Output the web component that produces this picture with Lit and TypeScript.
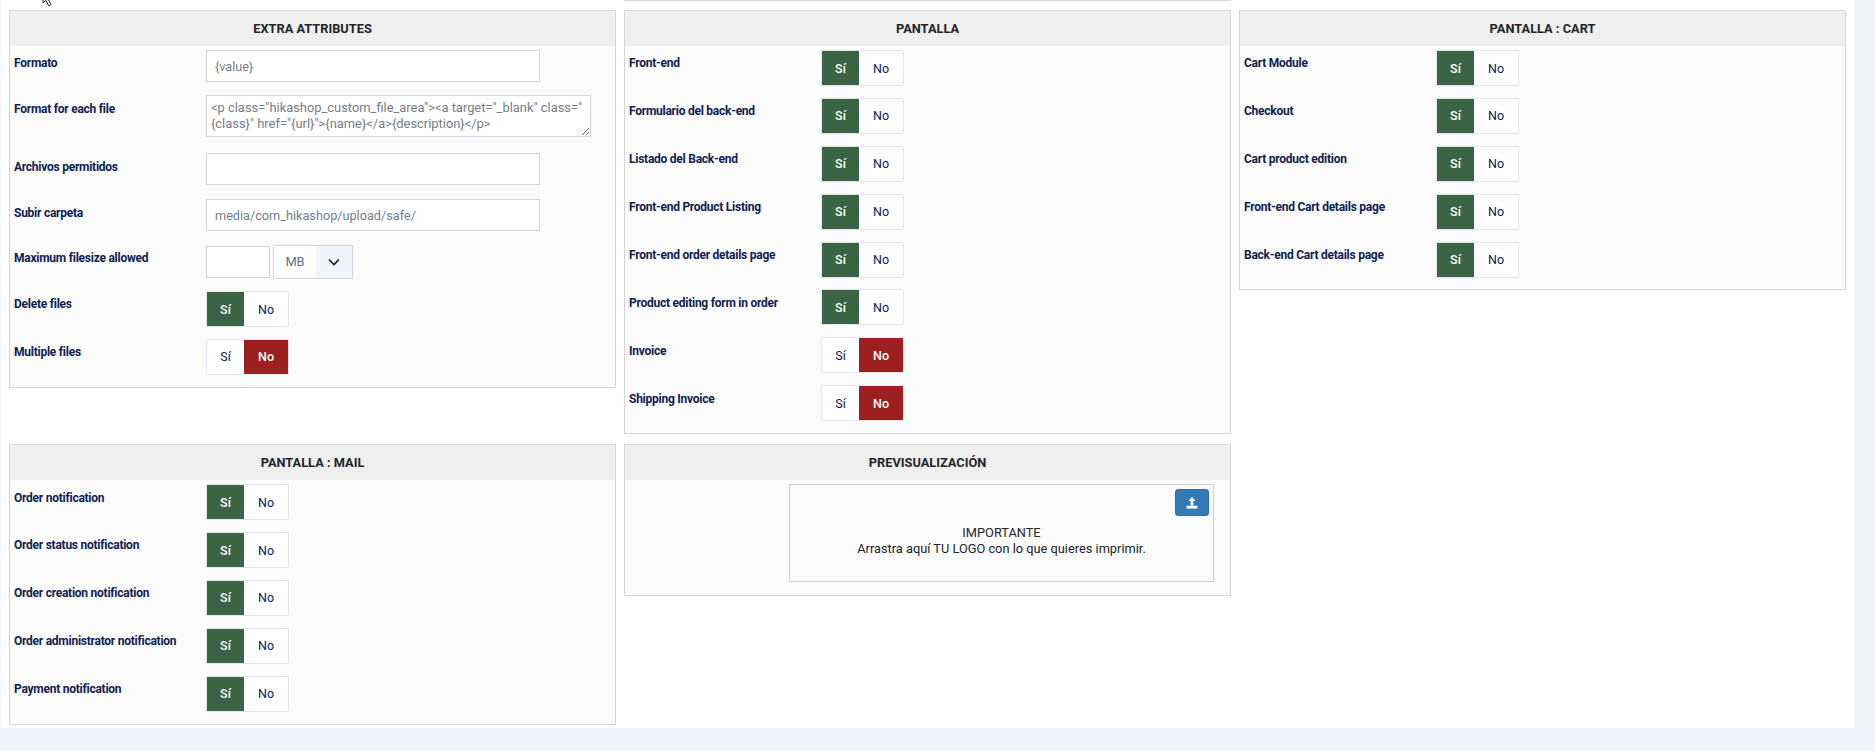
import { LitElement, css, html } from "lit";
import { customElement } from "lit/decorators.js";

type Row = [string, boolean];

const pantalla: Row[] = [
  ["Front-end", true],
  ["Formulario del back-end", true],
  ["Listado del Back-end", true],
  ["Front-end Product Listing", true],
  ["Front-end order details page", true],
  ["Product editing form in order", true],
  ["Invoice", false],
  ["Shipping Invoice", false],
];

const cart: Row[] = [
  ["Cart Module", true],
  ["Checkout", true],
  ["Cart product edition", true],
  ["Front-end Cart details page", true],
  ["Back-end Cart details page", true],
];

const mail: Row[] = [
  ["Order notification", true],
  ["Order status notification", true],
  ["Order creation notification", true],
  ["Order administrator notification", true],
  ["Payment notification", true],
];

const fileFormat =
  '<p class="hikashop_custom_file_area"><a target="_blank" class="{class}" href="{url}">{name}</a>{description}</p>';

@customElement("app-root")
export class AppRoot extends LitElement {
  static styles = css`
    :host {
      display: block;
      height: 751px;
      background: #f0f4fb;
      font-family: Roboto, "Liberation Sans", sans-serif;
      font-size: 12px;
      color: #0d2252;
      overflow: hidden;
    }

    .main {
      position: relative;
      box-sizing: border-box;
      width: 1853px;
      height: 728px;
      margin-left: 1px;
      padding-left: 8px;
      background: #fff;
    }

    .cursor {
      position: absolute;
      left: 41px;
      top: -11px;
    }

    .grid {
      display: grid;
      grid-template-columns: repeat(3, 607px);
      column-gap: 8px;
      align-items: start;
    }

    .cut {
      grid-column: 2;
      height: 1px;
      background: #d5d5d5;
    }

    .top {
      height: 1px;
      margin-bottom: 9px;
    }

    .second {
      margin-top: 10px;
    }

    .panel {
      box-sizing: border-box;
      border: 1px solid #d5d5d5;
      background: #fbfbfb;
    }

    .panel h3 {
      margin: 0;
      height: 35px;
      line-height: 35px;
      background: #efefef;
      text-align: center;
      font-size: 12.8px;
      font-weight: 700;
      color: #212529;
    }

    .body {
      padding: 4px 4px 0;
    }

    .row {
      display: grid;
      grid-template-columns: 192px 1fr;
      align-items: start;
      height: 47.9px;
    }

    .label {
      padding-top: 4.4px;
      line-height: 18px;
      font-weight: 700;
      letter-spacing: -0.25px;
    }

    .toggle {
      display: inline-flex;
      box-sizing: border-box;
      width: 83px;
      height: 36px;
      border: 1px solid #e4e6ef;
      border-radius: 2px;
      background: #fff;
      font-size: 12.5px;
    }

    .toggle span {
      display: flex;
      align-items: center;
      justify-content: center;
    }

    .toggle .yes {
      width: 37px;
    }

    .toggle .no {
      flex: 1;
    }

    .toggle .on-yes {
      background: #3a6544;
      color: #fff;
      font-weight: 500;
    }

    .toggle .on-no {
      background: #9e1f1f;
      color: #fff;
      font-weight: 500;
    }

    input,
    textarea {
      box-sizing: border-box;
      display: block;
      border: 1px solid #d0d4de;
      background: #fff;
      color: #777d88;
      font-family: inherit;
      outline: none;
      margin: 0;
    }

    input {
      width: 334px;
      height: 32px;
      padding: 0 8px;
      font-size: 12.7px;
    }

    textarea {
      width: 385px;
      height: 42px;
      padding: 4px;
      font-size: 12.9px;
      line-height: 16px;
    }

    .row-format {
      height: 45px;
    }

    .row-area {
      height: 58px;
    }

    .row-field {
      height: 46px;
    }

    .row-area .label,
    .row-field .label {
      padding-top: 5px;
    }

    .row-field .size-label {
      padding-top: 4px;
    }

    .size {
      display: flex;
      align-items: center;
      gap: 3px;
    }

    .size input {
      width: 64px;
    }

    .select {
      display: flex;
      box-sizing: border-box;
      width: 80px;
      height: 34px;
      border: 1px solid #d0d4de;
      background: #fff;
      color: #5d6b85;
      font-size: 12.8px;
    }

    .select .value {
      width: 42px;
      line-height: 32px;
      text-align: center;
    }

    .select .arrow {
      flex: 1;
      display: flex;
      align-items: center;
      justify-content: center;
      background: #f0f4fb;
    }

    .preview-body {
      display: flex;
      justify-content: flex-end;
      padding: 4px 16px 13px 0;
    }

    .drop {
      position: relative;
      box-sizing: border-box;
      display: flex;
      align-items: center;
      justify-content: center;
      width: 425px;
      height: 98px;
      padding-top: 16px;
      border: 1px solid #cfcfcf;
      font-size: 12.8px;
      line-height: 16px;
      text-align: center;
      color: #212529;
    }

    .upload {
      position: absolute;
      top: 4px;
      right: 4px;
      display: flex;
      align-items: center;
      justify-content: center;
      box-sizing: border-box;
      width: 34px;
      height: 27px;
      border: 1px solid #2e6da4;
      border-radius: 3px;
      background: #337ab7;
    }
  `;

  private _toggle(on: boolean) {
    return html`<div class="toggle">
      <span class="yes ${on ? "on-yes" : ""}">Sí</span>
      <span class="no ${on ? "" : "on-no"}">No</span>
    </div>`;
  }

  private _rows(rows: Row[]) {
    return rows.map(
      ([label, on]) => html`<div class="row">
        <div class="label">${label}</div>
        ${this._toggle(on)}
      </div>`
    );
  }

  render() {
    return html`<div class="main">
      <svg class="cursor" width="12" height="18" viewBox="0 0 12 18">
        <path d="M1 1v13l3-2.6 2.6 5.4 2.4-1.2-2.6-5.2H11z" fill="#fff" stroke="#222" />
      </svg>
      <div class="grid top"><div class="cut"></div></div>
      <div class="grid">
        <section class="panel">
          <h3>EXTRA ATTRIBUTES</h3>
          <div class="body">
            <div class="row row-format">
              <div class="label">Formato</div>
              <input .value=${"{value}"} />
            </div>
            <div class="row row-area">
              <div class="label">Format for each file</div>
              <textarea .value=${fileFormat}></textarea>
            </div>
            <div class="row row-field">
              <div class="label">Archivos permitidos</div>
              <input />
            </div>
            <div class="row row-field">
              <div class="label">Subir carpeta</div>
              <input .value=${"media/com_hikashop/upload/safe/"} />
            </div>
            <div class="row row-field">
              <div class="label size-label">Maximum filesize allowed</div>
              <div class="size">
                <input />
                <div class="select">
                  <div class="value">MB</div>
                  <div class="arrow">
                    <svg width="12" height="8" viewBox="0 0 12 8">
                      <path d="M1 1.5l5 5 5-5" fill="none" stroke="#1a1a1a" stroke-width="1.6" />
                    </svg>
                  </div>
                </div>
              </div>
            </div>
            ${this._rows([
              ["Delete files", true],
              ["Multiple files", false],
            ])}
          </div>
        </section>

        <section class="panel">
          <h3>PANTALLA</h3>
          <div class="body">${this._rows(pantalla)}</div>
        </section>

        <section class="panel">
          <h3>PANTALLA : CART</h3>
          <div class="body">${this._rows(cart)}</div>
        </section>
      </div>

      <div class="grid second">
        <section class="panel">
          <h3>PANTALLA : MAIL</h3>
          <div class="body">${this._rows(mail)}</div>
        </section>

        <section class="panel">
          <h3>PREVISUALIZACIÓN</h3>
          <div class="preview-body">
            <div class="drop">
              <div>IMPORTANTE<br />Arrastra aquí TU LOGO con lo que quieres imprimir.</div>
              <div class="upload">
                <svg width="12" height="12" viewBox="0 0 12 12">
                  <path d="M6 0l3.5 4H7.3v4.4H4.7V4H2.5z" fill="#fff" />
                  <rect x="0.5" y="8.8" width="11" height="2.8" rx="1.2" fill="#fff" />
                </svg>
              </div>
            </div>
          </div>
        </section>
      </div>
    </div>`;
  }
}
